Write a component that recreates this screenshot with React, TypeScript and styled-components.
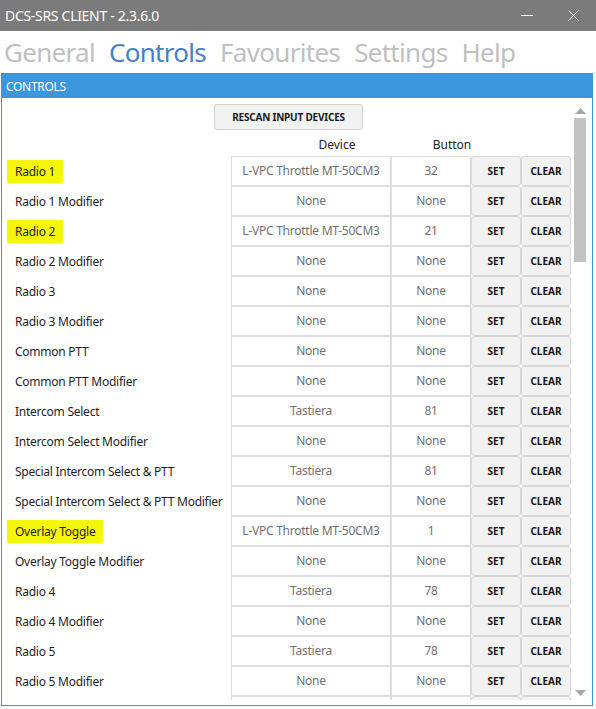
import styled, { createGlobalStyle } from 'styled-components';

interface Binding {
  name: string;
  device: string;
  button: string;
  mark?: boolean;
}

const rows: Binding[] = [
  { name: 'Radio 1', device: 'L-VPC Throttle MT-50CM3', button: '32', mark: true },
  { name: 'Radio 1 Modifier', device: 'None', button: 'None' },
  { name: 'Radio 2', device: 'L-VPC Throttle MT-50CM3', button: '21', mark: true },
  { name: 'Radio 2 Modifier', device: 'None', button: 'None' },
  { name: 'Radio 3', device: 'None', button: 'None' },
  { name: 'Radio 3 Modifier', device: 'None', button: 'None' },
  { name: 'Common PTT', device: 'None', button: 'None' },
  { name: 'Common PTT Modifier', device: 'None', button: 'None' },
  { name: 'Intercom Select', device: 'Tastiera', button: '81' },
  { name: 'Intercom Select Modifier', device: 'None', button: 'None' },
  { name: 'Special Intercom Select & PTT', device: 'Tastiera', button: '81' },
  { name: 'Special Intercom Select & PTT Modifier', device: 'None', button: 'None' },
  { name: 'Overlay Toggle', device: 'L-VPC Throttle MT-50CM3', button: '1', mark: true },
  { name: 'Overlay Toggle Modifier', device: 'None', button: 'None' },
  { name: 'Radio 4', device: 'Tastiera', button: '78' },
  { name: 'Radio 4 Modifier', device: 'None', button: 'None' },
  { name: 'Radio 5', device: 'Tastiera', button: '78' },
  { name: 'Radio 5 Modifier', device: 'None', button: 'None' },
];

const tabs = ['General', 'Controls', 'Favourites', 'Settings', 'Help'];

const GlobalStyle = createGlobalStyle`
  html, body {
    margin: 0;
    padding: 0;
    background: #ffffff;
    font-family: 'Noto Sans', 'Open Sans', sans-serif;
  }
`;

const Window = styled.div`
  width: 596px;
  height: 709px;
  display: flex;
  flex-direction: column;
  background: #ffffff;
  overflow: hidden;
`;

const TitleBar = styled.div`
  height: 31px;
  flex-shrink: 0;
  background: #7b7b7b;
  display: flex;
  align-items: center;
  padding-left: 5px;
  color: #ffffff;
  font-size: 14px;
`;

const TitleText = styled.span`
  flex: 1;
  letter-spacing: -0.3px;
`;

const WinButton = styled.div`
  width: 46px;
  height: 31px;
  display: flex;
  align-items: center;
  justify-content: center;
`;

const TabBar = styled.div`
  height: 42px;
  flex-shrink: 0;
  display: flex;
  align-items: center;
  gap: 14px;
  padding-left: 4px;
`;

const Tab = styled.span<{ $active?: boolean }>`
  font-size: 26px;
  font-weight: 400;
  letter-spacing: -0.7px;
  color: ${(p) => (p.$active ? '#4a80c4' : '#bfbfbf')};
`;

const Panel = styled.div`
  flex: 1;
  margin: 0 3px 3px 1px;
  border: 1px solid #3d95db;
  display: flex;
  flex-direction: column;
  min-height: 0;
`;

const PanelHeader = styled.div`
  height: 24px;
  flex-shrink: 0;
  background: #3c96de;
  color: #ffffff;
  font-size: 12px;
  display: flex;
  align-items: center;
  padding-left: 4px;
  letter-spacing: -0.3px;
`;

const PanelBody = styled.div`
  flex: 1;
  display: flex;
  min-height: 0;
  padding-bottom: 5px;
`;

const Content = styled.div`
  flex: 1;
  overflow: hidden;
`;

const RescanRow = styled.div`
  display: flex;
  justify-content: center;
  padding: 6px 0 4px 0;
`;

const RescanButton = styled.button`
  width: 149px;
  height: 26px;
  margin-left: 4px;
  border: 1px solid #cfcfcf;
  border-radius: 3px;
  background: #f2f2f2;
  font-family: 'Noto Sans', sans-serif;
  font-weight: 700;
  font-size: 10px;
  color: #1a1a1a;
  letter-spacing: -0.2px;
`;

const Grid = styled.div`
  display: grid;
  grid-template-columns: 229px 160px 80px 50px 50px;
`;

const HeadCell = styled.div<{ $shift: number }>`
  height: 22px;
  display: flex;
  align-items: center;
  justify-content: center;
  padding-left: ${(p) => p.$shift * 2}px;
  padding-bottom: 2px;
  box-sizing: border-box;
  font-size: 12px;
  color: #222222;
`;

const LabelCell = styled.div`
  height: 30px;
  display: flex;
  align-items: center;
  padding-left: 5px;
`;

const Label = styled.span<{ $mark?: boolean }>`
  height: 23px;
  display: flex;
  align-items: center;
  padding: 0 8px;
  background: ${(p) => (p.$mark ? '#f6f60a' : 'transparent')};
  font-size: 12px;
  color: #1e1e1e;
  letter-spacing: -0.25px;
  white-space: nowrap;
`;

const ValueCell = styled.div`
  height: 30px;
  box-sizing: border-box;
  border: 1px solid #dedede;
  display: flex;
  align-items: center;
  justify-content: center;
  padding-bottom: 2px;
  font-size: 12px;
  color: #6f6f6f;
  letter-spacing: -0.25px;
  white-space: nowrap;
`;

const ActionButton = styled.button`
  height: 30px;
  box-sizing: border-box;
  margin: 0;
  border: 1px solid #d6d6d6;
  border-radius: 3px;
  background: #f2f2f2;
  font-family: 'Noto Sans', sans-serif;
  font-weight: 700;
  font-size: 10px;
  color: #151515;
  padding: 0;
`;

const ScrollTrack = styled.div`
  width: 21px;
  flex-shrink: 0;
  display: flex;
  flex-direction: column;
  align-items: center;
  padding-right: 3px;
  box-sizing: border-box;
`;

const ScrollArrow = styled.div`
  height: 14px;
  display: flex;
  align-items: center;
  justify-content: center;
  margin-top: 6px;
`;

const ScrollThumb = styled.div`
  width: 12px;
  height: 144px;
  background: #c2c2c2;
`;

const ScrollSpacer = styled.div`
  flex: 1;
`;

export default function App() {
  return (
    <Window>
      <GlobalStyle />
      <TitleBar>
        <TitleText>DCS-SRS CLIENT - 2.3.6.0</TitleText>
        <WinButton>
          <svg width="12" height="2" viewBox="0 0 12 2">
            <rect width="12" height="1" fill="#ffffff" />
          </svg>
        </WinButton>
        <WinButton>
          <svg width="11" height="11" viewBox="0 0 11 11">
            <path d="M0.5 0.5 L10.5 10.5 M10.5 0.5 L0.5 10.5" stroke="#ffffff" strokeWidth="1" />
          </svg>
        </WinButton>
      </TitleBar>
      <TabBar>
        {tabs.map((t) => (
          <Tab key={t} $active={t === 'Controls'}>
            {t}
          </Tab>
        ))}
      </TabBar>
      <Panel>
        <PanelHeader>CONTROLS</PanelHeader>
        <PanelBody>
          <Content>
            <RescanRow>
              <RescanButton>RESCAN INPUT DEVICES</RescanButton>
            </RescanRow>
            <Grid>
              <div />
              <HeadCell $shift={26}>Device</HeadCell>
              <HeadCell $shift={21}>Button</HeadCell>
              <div />
              <div />
              {rows.map((r) => (
                <Row key={r.name} row={r} />
              ))}
              {/* next row, scrolled almost out of view */}
              <LabelCell />
              <ValueCell />
              <ValueCell />
              <ActionButton />
              <ActionButton />
            </Grid>
          </Content>
          <ScrollTrack>
            <ScrollArrow>
              <svg width="11" height="6" viewBox="0 0 11 6">
                <path d="M0 6 L5.5 0 L11 6 Z" fill="#a8a8a8" />
              </svg>
            </ScrollArrow>
            <ScrollThumb />
            <ScrollSpacer />
            <ScrollArrow>
              <svg width="11" height="6" viewBox="0 0 11 6">
                <path d="M0 0 L5.5 6 L11 0 Z" fill="#a8a8a8" />
              </svg>
            </ScrollArrow>
          </ScrollTrack>
        </PanelBody>
      </Panel>
    </Window>
  );
}

function Row({ row }: { row: Binding }) {
  return (
    <>
      <LabelCell>
        <Label $mark={row.mark}>{row.name}</Label>
      </LabelCell>
      <ValueCell>{row.device}</ValueCell>
      <ValueCell>{row.button}</ValueCell>
      <ActionButton>SET</ActionButton>
      <ActionButton>CLEAR</ActionButton>
    </>
  );
}
